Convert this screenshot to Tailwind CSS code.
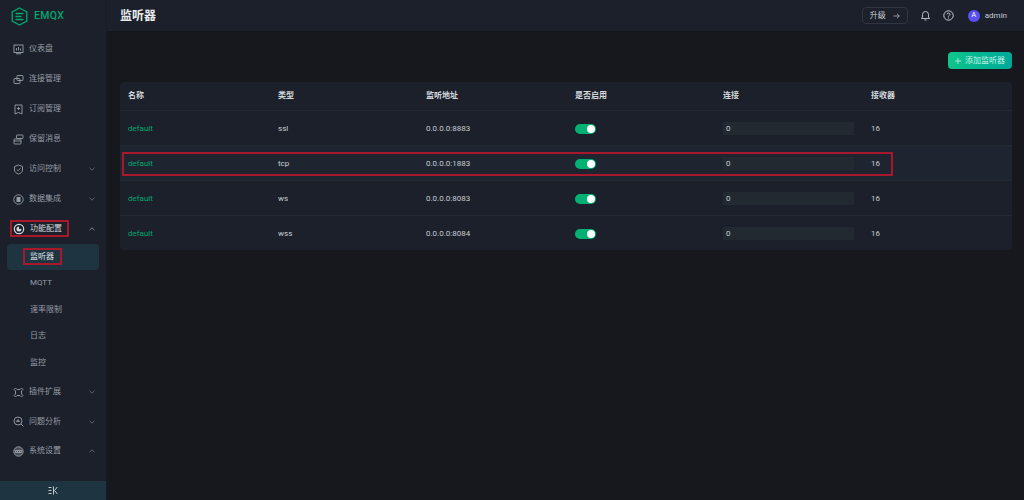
<!DOCTYPE html>
<html lang="zh">
<head>
    <meta charset="UTF-8">
    <title>监听器 | EMQX</title>
    <script src="https://cdn.jsdelivr.net/npm/@tailwindcss/browser@4"></script>
</head>
<body class="bg-[#16181d] font-['Roboto','Noto_Sans_CJK_SC',sans-serif] overflow-hidden">
<div class="relative flex w-[1024px] h-[500px]">

    <!-- sidebar -->
    <aside class="w-[107px] h-full bg-[#1b202a] flex flex-col shrink-0 border-r border-[#171b22]">
        <div class="h-[32px] flex items-center pl-[11px] gap-[6px]">
            <svg class="w-[17px] h-[19px]" viewBox="0 0 17 19" fill="none" stroke="#00a870" stroke-width="1.3">
                <path d="M8.5 1 L15.8 5 V14 L8.5 18 L1.2 14 V5 Z"/>
                <path d="M5 6.5 H12 M5 9.5 H10 M5 12.5 H12" stroke-linecap="round"/>
            </svg>
            <span class="text-[10.5px] font-medium tracking-[0.3px] text-[#00a870]">EMQX</span>
        </div>
        <nav class="text-[8px] text-[#979ca5] flex-1 flex flex-col">
            <!-- dashboard -->
            <a class="h-[30px] mt-[2px] flex items-center pl-[13px] gap-[5px]">
                <svg class="w-[11px] h-[11px]" viewBox="0 0 11 11" fill="none" stroke="#9aa0aa" stroke-width="0.9"><rect x="1" y="1" width="9" height="7.5"/><path d="M3 9.8H8M3.5 6.5V4M5.5 6.5V3M7.5 6.5V4.5"/></svg>
                <span>仪表盘</span>
            </a>
            <a class="h-[30px] flex items-center pl-[13px] gap-[5px]">
                <svg class="w-[11px] h-[11px]" viewBox="0 0 11 11" fill="none" stroke="#9aa0aa" stroke-width="0.9"><rect x="4" y="1.5" width="6" height="5" rx="0.6"/><rect x="1" y="4.5" width="6" height="5" rx="0.6"/></svg>
                <span>连接管理</span>
            </a>
            <a class="h-[30px] flex items-center pl-[13px] gap-[5px]">
                <svg class="w-[11px] h-[11px]" viewBox="0 0 11 11" fill="none" stroke="#9aa0aa" stroke-width="0.9"><path d="M2 1H9V10L5.5 8.5 2 10ZM5.5 3V6M4 4.5H7"/></svg>
                <span>订阅管理</span>
            </a>
            <a class="h-[30px] flex items-center pl-[13px] gap-[5px]">
                <svg class="w-[11px] h-[11px]" viewBox="0 0 11 11" fill="none" stroke="#9aa0aa" stroke-width="0.9"><rect x="3.5" y="1" width="6.5" height="3.5" rx="0.6"/><rect x="1" y="5" width="7" height="5" rx="0.6"/><path d="M1 7H8"/></svg>
                <span>保留消息</span>
            </a>
            <a class="h-[30px] flex items-center pl-[13px] gap-[5px]">
                <svg class="w-[11px] h-[11px]" viewBox="0 0 11 11" fill="none" stroke="#9aa0aa" stroke-width="0.9"><path d="M5.5 1 9.5 2.5V6C9.5 8 7.5 9.5 5.5 10 3.5 9.5 1.5 8 1.5 6V2.5ZM3.8 5.5 5.2 6.8 7.4 4.2"/></svg>
                <span class="flex-1">访问控制</span>
                <svg class="w-[6px] h-[4px] mr-[11px]" viewBox="0 0 6 4" fill="none" stroke="#6f7580" stroke-width="0.8"><path d="M0.5 0.8 3 3.2 5.5 0.8"/></svg>
            </a>
            <a class="h-[30px] flex items-center pl-[13px] gap-[5px]">
                <svg class="w-[11px] h-[11px]" viewBox="0 0 11 11" fill="none" stroke="#9aa0aa" stroke-width="0.9"><circle cx="5.5" cy="5.5" r="4.7"/><rect x="3.5" y="3" width="4" height="5" fill="#9aa0aa" stroke="none"/></svg>
                <span class="flex-1">数据集成</span>
                <svg class="w-[6px] h-[4px] mr-[11px]" viewBox="0 0 6 4" fill="none" stroke="#6f7580" stroke-width="0.8"><path d="M0.5 0.8 3 3.2 5.5 0.8"/></svg>
            </a>
            <a class="h-[30px] flex items-center pl-[13px] gap-[5px] text-[#d5d8dd]">
                <svg class="w-[12px] h-[12px]" viewBox="0 0 11 11" fill="none" stroke="#d5d8dd" stroke-width="1.1"><circle cx="5.5" cy="5.5" r="4.3"/><path d="M5.5 3.2A2.3 2.3 0 1 0 7.8 5.5H5.5Z" fill="#d5d8dd" stroke="none"/></svg>
                <span class="flex-1">功能配置</span>
                <svg class="w-[6px] h-[4px] mr-[11px]" viewBox="0 0 6 4" fill="none" stroke="#9aa0aa" stroke-width="0.8"><path d="M0.5 3.2 3 0.8 5.5 3.2"/></svg>
            </a>
            <!-- sub menu -->
            <a class="mx-[7px] h-[26px] rounded-[4px] bg-[#1f3441] flex items-center pl-[23px] text-[#dfe2e6]">监听器</a>
            <a class="h-[26px] flex items-center pl-[30px]">MQTT</a>
            <a class="h-[27px] flex items-center pl-[30px]">速率限制</a>
            <a class="h-[26px] flex items-center pl-[30px]">日志</a>
            <a class="h-[27px] flex items-center pl-[30px]">监控</a>
            <a class="h-[30px] mt-[1px] flex items-center pl-[13px] gap-[5px]">
                <svg class="w-[11px] h-[11px]" viewBox="0 0 11 11" fill="none" stroke="#9aa0aa" stroke-width="0.9"><path d="M2.5 1 1 2.5 2.5 4V7L1 8.5 2.5 10 4 8.5H7L8.5 10 10 8.5 8.5 7V4L10 2.5 8.5 1 7 2.5H4Z"/></svg>
                <span class="flex-1">插件扩展</span>
                <svg class="w-[6px] h-[4px] mr-[11px]" viewBox="0 0 6 4" fill="none" stroke="#6f7580" stroke-width="0.8"><path d="M0.5 0.8 3 3.2 5.5 0.8"/></svg>
            </a>
            <a class="h-[29px] flex items-center pl-[13px] gap-[5px]">
                <svg class="w-[11px] h-[11px]" viewBox="0 0 11 11" fill="none" stroke="#9aa0aa" stroke-width="0.9"><circle cx="5" cy="5" r="4"/><path d="M8 8 10.5 10.5M3.5 5.5 5 3.5 6.5 5.5Z"/></svg>
                <span class="flex-1">问题分析</span>
                <svg class="w-[6px] h-[4px] mr-[11px]" viewBox="0 0 6 4" fill="none" stroke="#6f7580" stroke-width="0.8"><path d="M0.5 0.8 3 3.2 5.5 0.8"/></svg>
            </a>
            <a class="h-[30px] flex items-center pl-[13px] gap-[5px]">
                <svg class="w-[11px] h-[11px]" viewBox="0 0 11 11" fill="none" stroke="#9aa0aa" stroke-width="0.9"><circle cx="5.5" cy="5.5" r="4.7" fill="#4a4f59"/><path d="M2.5 4.5H8.5V6.5H2.5ZM4.5 4.5V6.5M6.5 4.5V6.5"/></svg>
                <span class="flex-1">系统设置</span>
                <svg class="w-[6px] h-[4px] mr-[11px]" viewBox="0 0 6 4" fill="none" stroke="#6f7580" stroke-width="0.8"><path d="M0.5 3.2 3 0.8 5.5 3.2"/></svg>
            </a>
        </nav>
        <div class="h-[19px] bg-[#1f3441] flex items-center justify-center">
            <svg class="w-[10px] h-[9px]" viewBox="0 0 10 9" fill="none" stroke="#c4c8ce" stroke-width="1"><path d="M0.5 1.5H3.5M0.5 4.5H3.5M0.5 7.5H3.5M5.5 0.5V8.5M9.3 1 6.5 4.5 9.3 8"/></svg>
        </div>
    </aside>

    <div class="flex-1 flex flex-col">
        <!-- top bar -->
        <header class="h-[32px] bg-[#1b202a] border-b border-[#13161b] flex items-center pl-[13px] pr-[17px]">
            <h1 class="text-[12px] font-bold text-[#e8eaed] flex-1">监听器</h1>
            <button class="w-[46px] h-[17px] rounded-[4px] border border-[#30353f] flex items-center justify-center gap-[7px] text-[8px] text-[#c8ccd2]">
                升级
                <svg class="w-[7px] h-[6px]" viewBox="0 0 7 6" fill="none" stroke="#aeb2b9" stroke-width="0.8"><path d="M0.5 3H6.3M4 0.8 6.3 3 4 5.2"/></svg>
            </button>
            <svg class="w-[11px] h-[11px] ml-[12px]" viewBox="0 0 11 11" fill="none" stroke="#c8ccd2" stroke-width="0.9"><path d="M1.5 8.5H9.5L8.5 7V4.5A3 3 0 0 0 2.5 4.5V7ZM4.5 10H6.5"/></svg>
            <svg class="w-[11px] h-[11px] ml-[12px]" viewBox="0 0 11 11" fill="none" stroke="#c8ccd2" stroke-width="1"><circle cx="5.5" cy="5.5" r="4.7"/><path d="M4 4.3C4 2.6 7 2.6 7 4.3 7 5.5 5.5 5.3 5.5 6.6M5.5 7.5V8.5"/></svg>
            <span class="w-[12px] h-[12px] ml-[14px] rounded-full bg-[#5b4ff5] text-white text-[7px] flex items-center justify-center">A</span>
            <span class="ml-[5px] text-[8px] text-[#c8ccd2]">admin</span>
        </header>

        <main class="flex-1 pl-[13px] pr-[12px] pt-[20px]">
            <div class="flex justify-end">
                <button class="w-[64px] h-[17px] rounded-[4px] bg-gradient-to-r from-[#10c58a] to-[#00a89a] flex items-center justify-center gap-[4px] text-[8px] text-[#c9f3e5]">
                    <svg class="w-[6px] h-[6px]" viewBox="0 0 6 6" fill="none" stroke="#c9f3e5" stroke-width="0.8"><path d="M3 0V6M0 3H6"/></svg>
                    添加监听器
                </button>
            </div>

            <!-- listeners table -->
            <div class="mt-[13px] rounded-[4px] bg-[#1b202a] text-[8px] text-[#c8ccd2]">
                <div class="grid grid-cols-[150px_148px_149px_148px_148px_1fr] items-center h-[29px] pl-[8px] font-semibold border-b border-[#232831] text-[#d5d8dd]">
                    <span>名称</span><span>类型</span><span>监听地址</span><span>是否启用</span><span>连接</span><span>接收器</span>
                </div>
                <div class="grid grid-cols-[150px_148px_149px_148px_148px_1fr] items-center h-[35px] pt-[1px] pl-[8px] leading-[13px] border-b border-[#232831]">
                    <span class="text-[#00a870]">default</span><span>ssl</span><span>0.0.0.0:8883</span>
                    <span class="w-[21px] h-[10px] rounded-full bg-[#00b173] flex items-center justify-end pr-[1.5px]"><i class="w-[8px] h-[8px] rounded-full bg-white"></i></span>
                    <span class="w-[131px] h-[13px] bg-[#232931] flex items-center pl-[3px]">0</span><span>16</span>
                </div>
                <div class="grid grid-cols-[150px_148px_149px_148px_148px_1fr] items-center h-[35px] pt-[1px] pl-[8px] leading-[13px] border-b border-[#232831] bg-[#1e2530]">
                    <span class="text-[#00a870]">default</span><span>tcp</span><span>0.0.0.0:1883</span>
                    <span class="w-[21px] h-[10px] rounded-full bg-[#00b173] flex items-center justify-end pr-[1.5px]"><i class="w-[8px] h-[8px] rounded-full bg-white"></i></span>
                    <span class="w-[131px] h-[13px] bg-[#232931] flex items-center pl-[3px]">0</span><span>16</span>
                </div>
                <div class="grid grid-cols-[150px_148px_149px_148px_148px_1fr] items-center h-[35px] pt-[1px] pl-[8px] leading-[13px] border-b border-[#232831]">
                    <span class="text-[#00a870]">default</span><span>ws</span><span>0.0.0.0:8083</span>
                    <span class="w-[21px] h-[10px] rounded-full bg-[#00b173] flex items-center justify-end pr-[1.5px]"><i class="w-[8px] h-[8px] rounded-full bg-white"></i></span>
                    <span class="w-[131px] h-[13px] bg-[#232931] flex items-center pl-[3px]">0</span><span>16</span>
                </div>
                <div class="grid grid-cols-[150px_148px_149px_148px_148px_1fr] items-center h-[34px] pt-[1px] pl-[8px] leading-[13px]">
                    <span class="text-[#00a870]">default</span><span>wss</span><span>0.0.0.0:8084</span>
                    <span class="w-[21px] h-[10px] rounded-full bg-[#00b173] flex items-center justify-end pr-[1.5px]"><i class="w-[8px] h-[8px] rounded-full bg-white"></i></span>
                    <span class="w-[131px] h-[13px] bg-[#232931] flex items-center pl-[3px]">0</span><span>16</span>
                </div>
            </div>
        </main>
    </div>

    <!-- red annotation boxes on top of the screenshot -->
    <div class="absolute left-[10px] top-[220px] w-[59px] h-[17px] border-2 border-[#a8182a]"></div>
    <div class="absolute left-[23px] top-[248px] w-[39px] h-[17px] border-2 border-[#a8182a]"></div>
    <div class="absolute left-[122px] top-[152px] w-[771px] h-[24px] border-2 border-[#a8182a]"></div>
</div>
</body>
</html>
